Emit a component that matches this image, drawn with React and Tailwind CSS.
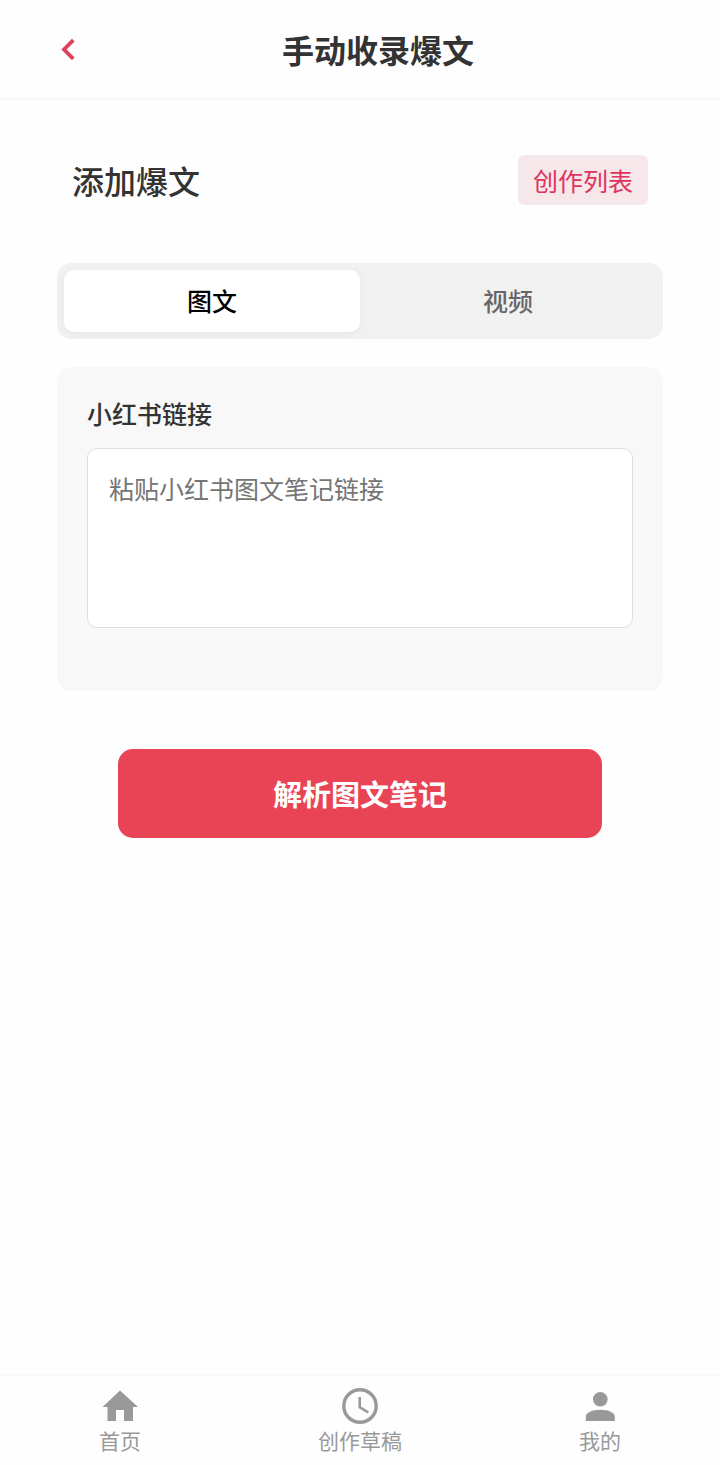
import { useState } from "react";

const tabs = [
  { id: "note", label: "图文" },
  { id: "video", label: "视频" },
];

const HomeIcon = () => (
  <svg viewBox="0 0 36 36" className="size-9 fill-current">
    <path d="M18 2.500L36 19H31V33H22V22H14V33H5.500V19H0.500Z" />
  </svg>
);

const ClockIcon = () => (
  <svg viewBox="0 0 36 36" className="size-9 fill-none stroke-current">
    <circle cx="18" cy="18" r="16.200" strokeWidth="3.400" />
    <path d="M17.700 9V19.300L26.300 24.300" strokeWidth="2.600" />
  </svg>
);

const UserIcon = () => (
  <svg viewBox="0 0 36 36" className="size-9 fill-current">
    <circle cx="18.300" cy="11.300" r="7.300" />
    <path d="M3.800 33V28.500C3.800 24.500 10 21.700 18.300 21.700S32.800 24.500 32.800 28.500V33Z" />
  </svg>
);

const navItems = [
  { label: "首页", icon: HomeIcon },
  { label: "创作草稿", icon: ClockIcon },
  { label: "我的", icon: UserIcon },
];

const Header = () => (
  <header className="flex h-[100px] items-center border-b-2 border-[#f8f8f8] px-[50px]">
    <button
      type="button"
      aria-label="返回"
      className="flex size-9 cursor-pointer items-center justify-center text-[#d9415f]"
    >
      <svg
        viewBox="0 0 14 22"
        className="h-[22px] w-[14px] fill-none stroke-current"
      >
        <path d="M12.300 2.200L3 11.500L12.300 20.800" strokeWidth="3.800" />
      </svg>
    </button>
    <h1 className="flex-1 text-center text-[32px] leading-[48px] font-bold text-[#333]">
      手动收录爆文
    </h1>
  </header>
);

const TabBar = ({ active, setActive }) => (
  <div
    role="tablist"
    className="mt-[58px] flex rounded-[14px] bg-[#f1f1f1] p-[7px]"
  >
    {tabs.map((tab) => (
      <button
        key={tab.id}
        type="button"
        role="tab"
        aria-selected={active === tab.id}
        onClick={() => setActive(tab.id)}
        className={
          active === tab.id
            ? "h-[62px] flex-1 cursor-pointer rounded-[10px] bg-white text-[25px] font-medium text-black shadow-[0_2px_8px_rgba(0,0,0,0.05)]"
            : "h-[62px] flex-1 cursor-pointer rounded-[10px] text-[25px] font-medium text-[#666]"
        }
      >
        {tab.label}
      </button>
    ))}
  </div>
);

const BottomNav = () => (
  <nav className="grid h-[91px] grid-cols-3 border-t-2 border-[#f8f8f8]">
    {navItems.map(({ label, icon: Icon }) => (
      <a
        key={label}
        href="#"
        className="flex flex-col items-center pt-3 text-[21px] leading-8 text-[#999]"
      >
        <Icon />
        {label}
      </a>
    ))}
  </nav>
);

const App = () => {
  const [active, setActive] = useState("note");
  const [link, setLink] = useState("");

  return (
    <div className="flex min-h-screen flex-col bg-[#fefefe] font-['Noto_Sans_CJK_SC',sans-serif]">
      <Header />

      <main className="flex-1 px-[57px] pt-[55px]">
        <div className="flex items-center justify-between px-[15px]">
          <h2 className="text-[32px] leading-[50px] font-medium text-[#333]">
            添加爆文
          </h2>
          <a
            href="#"
            className="rounded-md bg-[#f6e7ea] px-[15px] text-[25px] leading-[50px] text-[#e0325f]"
          >
            创作列表
          </a>
        </div>

        <TabBar active={active} setActive={setActive} />

        <div className="mt-7 rounded-[14px] bg-[#f8f8f8] px-[30px] pt-7 pb-[63px]">
          <label
            htmlFor="link"
            className="block text-[25px] leading-[37px] font-medium text-[#333]"
          >
            小红书链接
          </label>
          <textarea
            id="link"
            value={link}
            onChange={(e) => setLink(e.target.value)}
            placeholder="粘贴小红书图文笔记链接"
            className="mt-4 block h-[180px] w-full resize-none rounded-[10px] border border-[#ddd] bg-white px-[21px] py-5 text-[25px] leading-[38px] text-[#333] outline-none placeholder:text-[#757575]"
          />
        </div>

        <div className="px-[61px] pt-[58px]">
          <button
            type="button"
            className="h-[89px] w-full cursor-pointer rounded-[15px] bg-[#e94455] text-[29px] font-bold text-white"
          >
            解析图文笔记
          </button>
        </div>
      </main>

      <BottomNav />
    </div>
  );
};

export default App;
